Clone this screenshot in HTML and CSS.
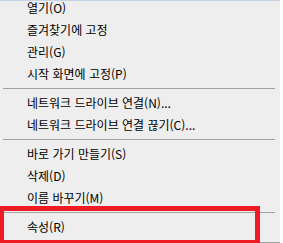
FILE: index.html
```html
<!DOCTYPE html>
<html lang="ko">
<head>
    <meta charset="UTF-8">
    <meta name="viewport" content="width=device-width, initial-scale=1.0">
    <title>Context Menu</title>
    <link rel="stylesheet" href="styles.css">
</head>
<body>

    <div class="menu">
        <div class="item first">열기(O)</div>
        <div class="item">즐겨찾기에 고정</div>
        <div class="item">관리(G)</div>
        <div class="item">시작 화면에 고정(P)</div>
        <div class="separator"></div>
        <div class="item">네트워크 드라이브 연결(N)...</div>
        <div class="item">네트워크 드라이브 연결 끊기(C)...</div>
        <div class="separator"></div>
        <div class="item">바로 가기 만들기(S)</div>
        <div class="item">삭제(D)</div>
        <div class="item">이름 바꾸기(M)</div>
        <div class="separator"></div>
        <div class="item">속성(R)</div>
    </div>

    <div class="highlight"></div>

</body>
</html>
```

FILE: styles.css
```css
* {
    margin: 0;
    padding: 0;
    box-sizing: border-box;
}

body {
    font-family: "Noto Sans CJK KR", "Noto Sans", sans-serif;
    font-size: 12px;
    color: #000;
    background-color: #fff;
    width: 283px;
    height: 243px;
    overflow: hidden;
    position: relative;
}

.menu {
    width: 280px;
    background-color: #eeeeee;
    border-top: 1px solid #c6d3e7;
    border-bottom: 1px solid #a0a0a0;
    padding-bottom: 4px;
}

.item {
    height: 22px;
    line-height: 22px;
    padding-left: 27px;
    white-space: nowrap;
}

.item.first {
    margin-top: -4px;
}

.separator {
    height: 1px;
    background-color: #a0a0a0;
    margin: 3px 5px 3px 3px;
}

.highlight {
    position: absolute;
    left: -1px;
    top: 206px;
    width: 261px;
    height: 39px;
    border: 5px solid #ed1c24;
}
```
